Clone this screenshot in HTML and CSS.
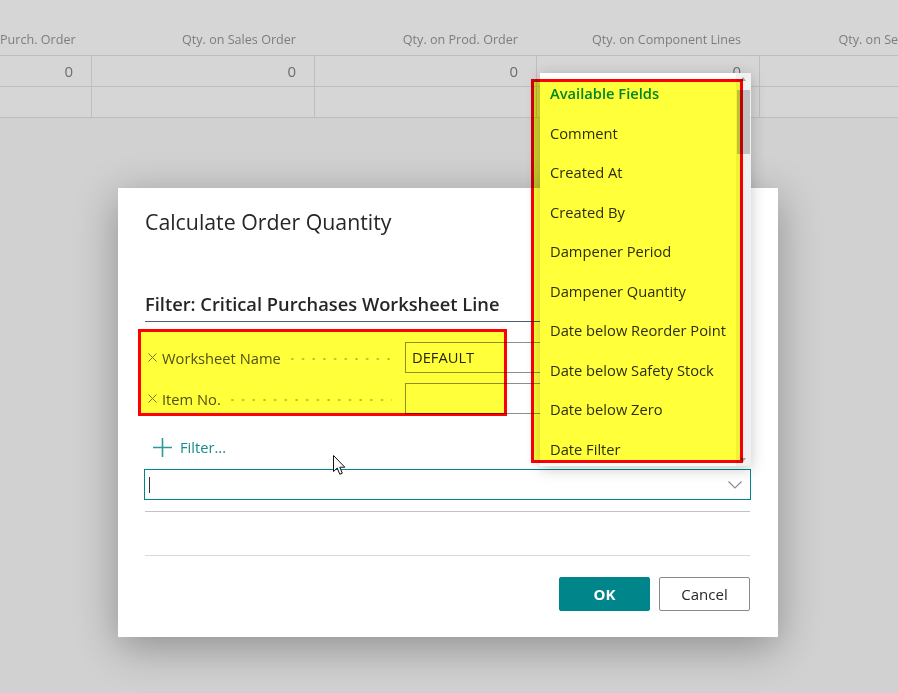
FILE: index.html
```html
<!DOCTYPE html>
<html lang="en">
<head>
  <meta charset="UTF-8">
  <meta name="viewport" content="width=device-width, initial-scale=1.0">
  <title>Calculate Order Quantity</title>
  <link rel="stylesheet" href="styles.css">
</head>
<body>
<div class="grid">
  <div class="grid-head">
    <div class="cell first">Purch. Order</div>
    <div class="cell">Qty. on Sales Order</div>
    <div class="cell">Qty. on Prod. Order</div>
    <div class="cell">Qty. on Component Lines</div>
    <div class="cell">Qty. on Service Order</div>
  </div>
  <div class="grid-row">
    <div class="cell first">0</div>
    <div class="cell">0</div>
    <div class="cell">0</div>
    <div class="cell">0</div>
    <div class="cell"></div>
  </div>
  <div class="grid-row">
    <div class="cell first"></div>
    <div class="cell"></div>
    <div class="cell"></div>
    <div class="cell"></div>
    <div class="cell"></div>
  </div>
</div>

<div class="dialog">
  <h1 class="dialog-title">Calculate Order Quantity</h1>
  <h2 class="filter-title">Filter: Critical Purchases Worksheet Line</h2>

  <div class="filter-rows">
    <div class="filter-row">
      <svg class="remove" width="9" height="9" viewBox="0 0 9 9"><path d="M0.5 0.5 L8.5 8.5 M8.5 0.5 L0.5 8.5" stroke="#777" stroke-width="1" fill="none"/></svg>
      <span class="filter-label">Worksheet Name</span>
      <span class="leader"></span>
      <div class="filter-input">DEFAULT</div>
    </div>
    <div class="filter-row">
      <svg class="remove" width="9" height="9" viewBox="0 0 9 9"><path d="M0.5 0.5 L8.5 8.5 M8.5 0.5 L0.5 8.5" stroke="#777" stroke-width="1" fill="none"/></svg>
      <span class="filter-label">Item No.</span>
      <span class="leader"></span>
      <div class="filter-input"></div>
    </div>
  </div>

  <div class="add-filter">
    <svg width="19" height="19" viewBox="0 0 19 19"><path d="M9.5 0 V19 M0 9.5 H19" stroke="#2a9a9a" stroke-width="1.6" fill="none"/></svg>
    <span>Filter...</span>
  </div>

  <div class="field-select">
    <span class="text-caret"></span>
    <svg class="chevron" width="14" height="8" viewBox="0 0 14 8"><path d="M0.5 0.5 L7 7 L13.5 0.5" stroke="#8a8a8a" stroke-width="1.1" fill="none"/></svg>
  </div>

  <div class="rule"></div>
  <div class="rule light"></div>

  <div class="dialog-footer">
    <button class="btn btn-primary">OK</button>
    <button class="btn">Cancel</button>
  </div>
</div>

<div class="field-menu">
  <ul class="field-list">
    <li class="group">Available Fields</li>
    <li>Comment</li>
    <li>Created At</li>
    <li>Created By</li>
    <li>Dampener Period</li>
    <li>Dampener Quantity</li>
    <li>Date below Reorder Point</li>
    <li>Date below Safety Stock</li>
    <li>Date below Zero</li>
    <li>Date Filter</li>
  </ul>
  <div class="scrollbar">
    <span class="arrow up"></span>
    <span class="thumb"></span>
    <span class="arrow down"></span>
  </div>
</div>

<div class="mark mark-filters"></div>
<div class="mark mark-fields"></div>

<svg class="pointer" width="13" height="21" viewBox="0 0 13 21">
  <path d="M0.5 0.5 L0.5 16.5 L4.2 13 L6.8 19.3 L9.3 18.2 L6.8 12.2 L11.8 12.2 Z" fill="#fff" stroke="#111" stroke-width="1" stroke-linejoin="round"/>
</svg>
</body>
</html>
```

FILE: styles.css
```css
html, body { margin: 0; height: 100%; }
body { background: #d1d1d1; font-family: "Open Sans", "Noto Sans", Arial, sans-serif; color: #212121; overflow: hidden; position: relative; }

/* page grid behind the dialog */
.grid { background: #d6d6d6; }
.grid-head, .grid-row { display: flex; width: 1200px; }
.grid-head { height: 56px; align-items: flex-end; border-bottom: 1px solid #bebebe; box-sizing: border-box; font-size: 12.6px; color: #7d7d7d; }
.grid-row { height: 31px; border-bottom: 1px solid #bebebe; box-sizing: border-box; font-size: 15px; color: #6e6e6e; }
.cell { flex: none; width: 223px; box-sizing: border-box; text-align: right; padding-right: 18px; border-right: 1px solid #bebebe; white-space: nowrap; }
.cell:nth-child(3) { width: 222px; }
.cell.first { width: 92px; }
.grid-head .cell { border-right-color: transparent; line-height: 20px; padding-bottom: 5px; }
.grid-row .cell { line-height: 30px; }

/* modal dialog */
.dialog { position: absolute; left: 118px; top: 188px; width: 660px; height: 449px; box-sizing: border-box; padding: 20px 28px 0 27px; background: #fff; box-shadow: 0 10px 40px rgba(0,0,0,.32); }
.dialog-title { margin: 0; font-size: 21.3px; line-height: 28px; font-weight: 500; color: #262626; }
.filter-title { margin: 56px 0 0; font-size: 18.3px; line-height: 24px; font-weight: 600; color: #262626; padding-bottom: 5px; border-bottom: 1px solid #505c6a; }

.filter-rows { margin-top: 20px; display: flex; flex-direction: column; gap: 10px; }
.filter-row { display: flex; align-items: center; height: 31px; font-size: 14.7px; color: #505050; }
.remove { margin-left: 3px; flex: none; }
.filter-label { margin-left: 5px; white-space: nowrap; }
.leader { flex: 1; height: 4px; margin: 2px 13px 0 6px; background: radial-gradient(circle, #b5b5b5 0.9px, transparent 1.3px) left center / 10.7px 4px repeat-x; }
.filter-input { flex: none; width: 345px; height: 31px; box-sizing: border-box; border: 1px solid #8e8e8e; padding: 0 6px; line-height: 29px; color: #262626; }

.add-filter { margin-top: 18px; height: 30px; display: flex; align-items: center; gap: 8px; padding-left: 8px; color: #1a8a8a; font-size: 14.7px; }
.add-filter svg { flex: none; }

.field-select { margin: 7px -1px 0; height: 31px; box-sizing: border-box; border: 1px solid #00858a; display: flex; align-items: center; justify-content: space-between; padding: 0 8px 0 4px; }
.text-caret { width: 1px; height: 16px; background: #333; }
.chevron { margin-top: 1px; }

.rule { margin-top: 11px; height: 1px; background: #bfc3c8; }
.rule.light { margin-top: 43px; background: #d9d9d9; }

.dialog-footer { margin-top: 21px; display: flex; justify-content: flex-end; gap: 9px; }
.btn { width: 91px; height: 34px; box-sizing: border-box; border: 1px solid #8a8a8a; border-radius: 2px; background: #fff; font-family: inherit; font-size: 15px; color: #262626; padding: 0; }
.btn-primary { background: #00858a; border-color: #00858a; color: #fff; font-weight: 700; }

/* field lookup menu */
.field-menu { position: absolute; left: 540px; top: 73px; width: 211px; height: 393px; background: #fff; box-shadow: 0 3px 14px rgba(0,0,0,.22); display: flex; overflow: hidden; }
.field-list { list-style: none; margin: 0; padding: 1px 0 0; flex: 1; }
.field-list li { height: 39.5px; line-height: 39.5px; padding-left: 10px; font-size: 14.7px; color: #2e2e2e; white-space: nowrap; }
.field-list li.group { color: #00858a; font-weight: 600; }
.scrollbar { flex: none; width: 15px; background: #f1f1f1; position: relative; }
.scrollbar .thumb { position: absolute; left: 1px; right: 1px; top: 17px; height: 64px; background: #c1c1c1; }
.scrollbar .arrow { position: absolute; left: 4px; width: 0; height: 0; border-left: 3.5px solid transparent; border-right: 3.5px solid transparent; }
.scrollbar .up { top: 4px; border-bottom: 4px solid #a3a3a3; }
.scrollbar .down { bottom: 4px; border-top: 4px solid #a3a3a3; }

/* highlight marks */
.mark { position: absolute; box-sizing: border-box; border: 3px solid #ff0000; background: #ffff3a; mix-blend-mode: multiply; }
.mark-filters { left: 138px; top: 329px; width: 369px; height: 87px; }
.mark-fields { left: 531px; top: 79px; width: 212px; height: 384px; }

.pointer { position: absolute; left: 333px; top: 455px; }
```
